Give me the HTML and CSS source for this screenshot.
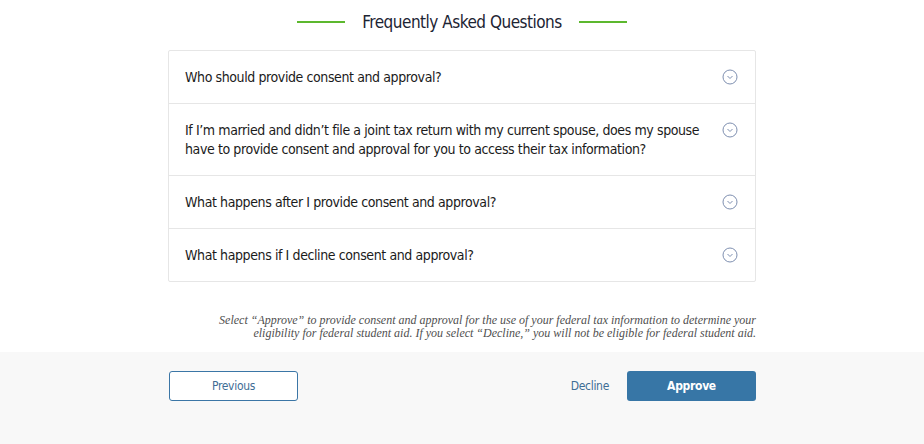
FILE: index.html
```html
<!DOCTYPE html>
<html lang="en">

<head>
    <meta charset="utf-8">
    <meta name="viewport" content="width=device-width, initial-scale=1.0">
    <title>Frequently Asked Questions</title>
    <link rel="stylesheet" href="styles.css">
</head>

<body>
    <main class="indhold">
        <h2 class="faq-titel"><span>Frequently Asked Questions</span></h2>

        <section class="faq">
            <div class="faq-rad">
                <p>Who should provide consent and approval?</p>
                <svg class="pil" viewBox="0 0 16 16" width="16" height="16"><circle cx="8" cy="8" r="7" /><path d="M5.5 7l2.5 2.5 2.5-2.5" /></svg>
            </div>
            <div class="faq-rad">
                <p>If I’m married and didn’t file a joint tax return with my current spouse, does my spouse have to provide consent and approval for you to access their tax information?</p>
                <svg class="pil" viewBox="0 0 16 16" width="16" height="16"><circle cx="8" cy="8" r="7" /><path d="M5.5 7l2.5 2.5 2.5-2.5" /></svg>
            </div>
            <div class="faq-rad">
                <p>What happens after I provide consent and approval?</p>
                <svg class="pil" viewBox="0 0 16 16" width="16" height="16"><circle cx="8" cy="8" r="7" /><path d="M5.5 7l2.5 2.5 2.5-2.5" /></svg>
            </div>
            <div class="faq-rad">
                <p>What happens if I decline consent and approval?</p>
                <svg class="pil" viewBox="0 0 16 16" width="16" height="16"><circle cx="8" cy="8" r="7" /><path d="M5.5 7l2.5 2.5 2.5-2.5" /></svg>
            </div>
        </section>

        <p class="note">Select “Approve” to provide consent and approval for the use of your federal tax information to determine your<br>eligibility for federal student aid. If you select “Decline,” you will not be eligible for federal student aid.</p>
    </main>

    <footer>
        <div class="knapper">
            <button class="forrige">Previous</button>
            <div class="hoejre">
                <button class="afvis">Decline</button>
                <button class="godkend">Approve</button>
            </div>
        </div>
    </footer>
</body>

</html>
```

FILE: styles.css
```css
body {
    margin: 0;
    font-family: "DejaVu Sans Condensed", "DejaVu Sans", sans-serif;
    font-stretch: condensed;
    color: #1b1b1b;
    background: #fff;
}

.indhold {
    width: 588px;
    margin: 0 auto;
    padding-top: 10px;
}

.faq-titel {
    display: flex;
    align-items: center;
    justify-content: center;
    gap: 17px;
    margin: 0 0 16px;
    font-size: 17px;
    letter-spacing: -0.5px;
    font-weight: normal;
    line-height: 24px;
    color: #1c2433;
}

.faq-titel::before,
.faq-titel::after {
    content: "";
    width: 48px;
    height: 2px;
    background: #5cb82e;
}

.faq {
    border: 1px solid #e6e6e6;
    border-radius: 2px;
}

.faq-rad {
    display: flex;
    justify-content: space-between;
    align-items: flex-start;
    padding: 16.5px 17px 16.5px 16px;
    border-top: 1px solid #e6e6e6;
}

.faq-rad:first-child {
    border-top: none;
}

.faq-rad p {
    margin: 0;
    max-width: 525px;
    font-size: 14px;
    letter-spacing: -0.4px;
    line-height: 19px;
}

.pil {
    flex: none;
    margin-top: 1px;
    fill: none;
    stroke: #7e8fb0;
    stroke-width: 1;
}

.note {
    margin: 32px 0 0;
    padding-bottom: 12px;
    text-align: right;
    font-family: "Liberation Serif", serif;
    font-style: italic;
    font-size: 12px;
    line-height: 13px;
    color: #4f4f4f;
}

footer {
    background: #f8f8f8;
    height: 92px;
}

.knapper {
    width: 588px;
    margin: 0 auto;
    padding-top: 19px;
    display: flex;
    justify-content: space-between;
}

button {
    font-family: "DejaVu Sans Condensed", "DejaVu Sans", sans-serif;
    font-stretch: condensed;
    font-size: 12px;
    letter-spacing: -0.3px;
    height: 30px;
    border-radius: 3px;
    cursor: pointer;
}

.forrige {
    width: 129px;
    margin-left: 1px;
    background: #fff;
    border: 1px solid #3b76a6;
    color: #3e6d95;
}

.hoejre {
    display: flex;
    align-items: center;
    gap: 18px;
}

.afvis {
    background: none;
    border: none;
    padding: 0;
    color: #3e6d95;
}

.godkend {
    width: 129px;
    background: #3776a6;
    border: none;
    color: #fff;
    font-weight: bold;
}
```
